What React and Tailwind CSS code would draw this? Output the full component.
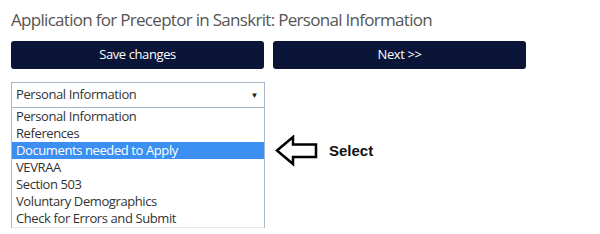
export default function App() {
  const options = [
    'Personal Information',
    'References',
    'Documents needed to Apply',
    'VEVRAA',
    'Section 503',
    'Voluntary Demographics',
    'Check for Errors and Submit',
  ];
  const selected = 2;

  return (
    <div className="w-[600px] h-[234px] bg-white overflow-hidden font-['Open_Sans',sans-serif]">
      <h1 className="pl-[11px] pt-[8px] text-[17px] leading-[24px] tracking-[-0.7px] text-[#555555]">
        Application for Preceptor in Sanskrit: Personal Information
      </h1>

      <div className="flex gap-[9px] pl-[11px] mt-[9px]">
        <button className="w-[253px] h-[28px] rounded-[3px] bg-[#0a1538] text-white text-[13px] tracking-[-0.4px]">
          Save changes
        </button>
        <button className="w-[253px] h-[28px] rounded-[3px] bg-[#0a1538] text-white text-[13px] tracking-[-0.4px]">
          Next &gt;&gt;
        </button>
      </div>

      <div className="flex mt-[13px] pl-[11px]">
        <div className="w-[254px]">
          {/* select box */}
          <div className="h-[26px] border border-[#a7b6cc] flex items-center justify-between pl-[4px] pr-[6px] text-[13px] tracking-[-0.4px] text-[#333333]">
            <span>Personal Information</span>
            <span className="text-[8px] text-[#222222]">▼</span>
          </div>
          {/* open list */}
          <div className="border-x border-b border-[#a7b6cc] border-b-[#e5e7eb]">
            {options.map((opt, i) => (
              <div
                key={opt}
                className={`h-[17px] leading-[17px] pl-[4px] text-[13px] tracking-[-0.4px] ${
                  i === selected ? 'bg-[#3b8ff0] text-white' : 'text-[#333333]'
                }`}
              >
                {opt}
              </div>
            ))}
          </div>
        </div>

        <div className="flex items-center gap-[10px] ml-[10px] mt-[53px] h-[32px]">
          <svg width="44" height="32" viewBox="0 0 44 32">
            <path
              d="M2 15.5 L18 2 L18 9.5 L41 9.5 L41 22 L18 22 L18 29 Z"
              fill="none"
              stroke="#000"
              strokeWidth="2.5"
              strokeLinejoin="miter"
            />
          </svg>
          <span className="font-['Liberation_Sans',Arial,sans-serif] font-bold text-[15px] text-[#111111]">
            Select
          </span>
        </div>
      </div>
    </div>
  );
}
